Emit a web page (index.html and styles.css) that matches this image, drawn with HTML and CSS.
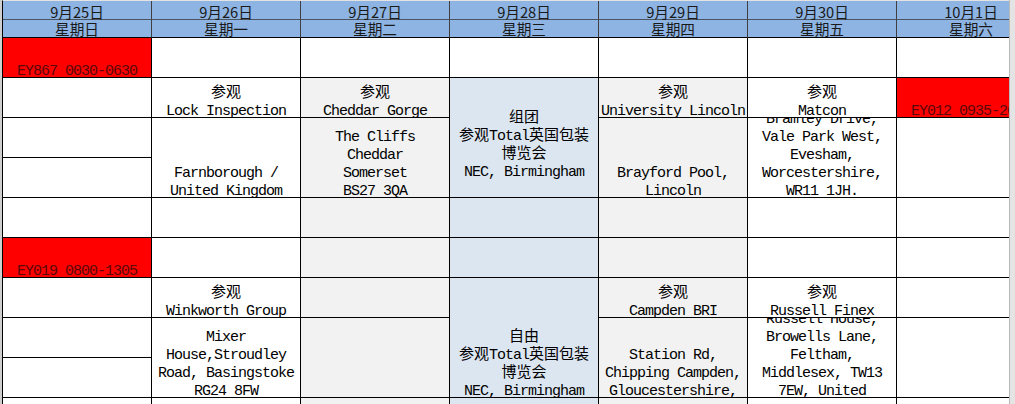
FILE: index.html
```html
<!DOCTYPE html>
<html lang="zh-CN">
<head>
<meta charset="utf-8">
<title>行程表</title>
<link rel="stylesheet" href="styles.css">
</head>
<body>
<div class="page">
  <div class="viewport">
    <div class="sheet">
      <!-- 9月25日 -->
      <div class="h h1">9月25日</div>
      <div class="h h2">星期日</div>
      <div class="c red"><div class="t"><div class="ln">EY867 0030-0630</div></div></div>
      <div class="c"></div>
      <div class="c"></div>
      <div class="c"></div>
      <div class="c"></div>
      <div class="c red"><div class="t"><div class="ln">EY019 0800-1305</div></div></div>
      <div class="c"></div>
      <div class="c"></div>
      <div class="c"></div>
      <div class="c"></div>

      <!-- 9月26日 -->
      <div class="h h1">9月26日</div>
      <div class="h h2">星期一</div>
      <div class="c"></div>
      <div class="c"><div class="t"><div class="ln zh">参观</div><div class="ln">Lock Inspection</div></div></div>
      <div class="c s2"><div class="t"><div class="ln">Farnborough /</div><div class="ln">United Kingdom</div></div></div>
      <div class="c"></div>
      <div class="c"></div>
      <div class="c"><div class="t"><div class="ln zh">参观</div><div class="ln">Winkworth Group</div></div></div>
      <div class="c s2"><div class="t"><div class="ln">Mixer</div><div class="ln">House,Stroudley</div><div class="ln">Road, Basingstoke</div><div class="ln">RG24 8FW</div></div></div>
      <div class="c"></div>

      <!-- 9月27日 -->
      <div class="h h1">9月27日</div>
      <div class="h h2">星期二</div>
      <div class="c"></div>
      <div class="c grey"><div class="t"><div class="ln zh">参观</div><div class="ln">Cheddar Gorge</div></div></div>
      <div class="c grey s2"><div class="t"><div class="ln">The Cliffs</div><div class="ln">Cheddar</div><div class="ln">Somerset</div><div class="ln">BS27 3QA</div></div></div>
      <div class="c grey"></div>
      <div class="c grey"></div>
      <div class="c grey"></div>
      <div class="c grey s2"></div>
      <div class="c grey"></div>

      <!-- 9月28日 -->
      <div class="h h1">9月28日</div>
      <div class="h h2">星期三</div>
      <div class="c"></div>
      <div class="c blue s3 top"><div class="t"><div class="ln zh">组团</div><div class="ln"><span class="zh">参观</span>Total<span class="zh">英国包装</span></div><div class="ln zh">博览会</div><div class="ln">NEC, Birmingham</div></div></div>
      <div class="c blue"></div>
      <div class="c blue"></div>
      <div class="c blue s3"><div class="t"><div class="ln zh">自由</div><div class="ln"><span class="zh">参观</span>Total<span class="zh">英国包装</span></div><div class="ln zh">博览会</div><div class="ln">NEC, Birmingham</div></div></div>
      <div class="c blue"></div>

      <!-- 9月29日 -->
      <div class="h h1">9月29日</div>
      <div class="h h2">星期四</div>
      <div class="c"></div>
      <div class="c grey"><div class="t"><div class="ln zh">参观</div><div class="ln">University Lincoln</div></div></div>
      <div class="c grey s2"><div class="t"><div class="ln">Brayford Pool,</div><div class="ln">Lincoln</div></div></div>
      <div class="c grey"></div>
      <div class="c grey"></div>
      <div class="c grey"><div class="t"><div class="ln zh">参观</div><div class="ln">Campden BRI</div></div></div>
      <div class="c grey s2"><div class="t"><div class="ln">Station Rd,</div><div class="ln">Chipping Campden,</div><div class="ln">Gloucestershire,</div></div></div>
      <div class="c grey"></div>

      <!-- 9月30日 -->
      <div class="h h1">9月30日</div>
      <div class="h h2">星期五</div>
      <div class="c"></div>
      <div class="c"><div class="t"><div class="ln zh">参观</div><div class="ln">Matcon</div></div></div>
      <div class="c s2"><div class="t"><div class="ln">Bramley Drive,</div><div class="ln">Vale Park West,</div><div class="ln">Evesham,</div><div class="ln">Worcestershire,</div><div class="ln">WR11 1JH.</div></div></div>
      <div class="c"></div>
      <div class="c"></div>
      <div class="c"><div class="t"><div class="ln zh">参观</div><div class="ln">Russell Finex</div></div></div>
      <div class="c s2"><div class="t"><div class="ln">Russell House,</div><div class="ln">Browells Lane,</div><div class="ln">Feltham,</div><div class="ln">Middlesex, TW13</div><div class="ln">7EW, United</div></div></div>
      <div class="c"></div>

      <!-- 10月1日 -->
      <div class="h h1">10月1日</div>
      <div class="h h2">星期六</div>
      <div class="c"></div>
      <div class="c red"><div class="t"><div class="ln">EY012 0935-2030</div></div></div>
      <div class="c s2"></div>
      <div class="c"></div>
      <div class="c"></div>
      <div class="c"></div>
      <div class="c s2"></div>
      <div class="c"></div>
    </div>
  </div>
  <div class="strip"></div>
</div>
</body>
</html>
```

FILE: styles.css
```css
html, body {
  margin: 0;
  padding: 0;
  background: #ffffff;
}

body {
  width: 1015px;
  height: 404px;
  overflow: hidden;
}

.page {
  display: flex;
  height: 404px;
}

.viewport {
  flex: none;
  width: 1009px;
  height: 404px;
  overflow: hidden;
  background: #cfcfcf;
}

.sheet {
  margin-left: 2px;
  width: 1043px;
  display: grid;
  grid-template-columns: repeat(7, 149px);
  grid-template-rows: 19px 18px repeat(10, 40px);
  grid-auto-flow: column;
  border-top: 1px solid #e3e3e3;
  border-left: 1px solid #000000;
  background: #ffffff;
}

.strip {
  flex: none;
  width: 5px;
  height: 404px;
  border-left: 1px solid #b9b9b9;
  background: #e4e4e4;
}

/* header cells */
.h {
  background: #8db4e2;
  border-right: 1px solid #3f3f3f;
  font-family: "Noto Sans CJK SC", "Liberation Sans", sans-serif;
  font-size: 14.67px;
  line-height: 16px;
  color: #1a1a1a;
  text-align: center;
  white-space: nowrap;
}

.h1 {
  padding-top: 3px;
  border-bottom: 1px solid #4a5563;
}

.h2 {
  padding-top: 1px;
  border-bottom: 1px solid #000000;
}

/* body cells */
.c {
  border-right: 1px solid #000000;
  border-bottom: 1px solid #000000;
  overflow: hidden;
  display: flex;
  flex-direction: column;
  justify-content: flex-end;
  text-align: center;
  font-family: "Liberation Mono", "Noto Sans CJK SC", monospace;
  font-size: 15px;
  letter-spacing: -1px;
  color: #000000;
}

.c .t {
  flex: none;
  margin-bottom: -4px;
}

.c.top {
  justify-content: flex-start;
  padding-top: 32px;
}

.c.top .t {
  margin-bottom: 0;
}

.ln {
  height: 18px;
  line-height: 18px;
  white-space: nowrap;
}

.zh {
  letter-spacing: 0;
}

.s2 {
  grid-row: span 2;
}

.s3 {
  grid-row: span 3;
}

.red {
  background: #ff0000;
  color: #5a0808;
}

.grey {
  background: #f2f2f2;
}

.blue {
  background: #dce6f1;
}
```
